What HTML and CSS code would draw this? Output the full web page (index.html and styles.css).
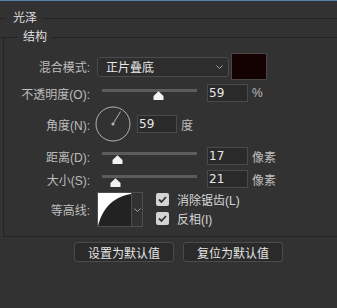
FILE: index.html
```html
<!DOCTYPE html>
<html>
<head>
  <meta charset="UTF-8">
  <title>光泽</title>
  <link rel="stylesheet" href="styles.css">
</head>
<body>
  <div class="panel">
    <div class="head head-outer"><span>光泽</span></div>

    <div class="group">
      <div class="head head-inner"><span>结构</span></div>

      <div class="row row-blend">
        <label class="lbl">混合模式:</label>
        <div class="select">
          <span>正片叠底</span>
          <svg class="chev" width="7" height="4" viewBox="0 0 7 4"><polyline points="0.5,0.5 3.5,3.5 6.5,0.5" fill="none" stroke="#a0a0a0" stroke-width="1"/></svg>
        </div>
        <div class="swatch"></div>
      </div>

      <div class="row">
        <label class="lbl">不透明度(O):</label>
        <div class="slider">
          <div class="track"></div>
          <svg class="thumb" style="left: 51px" width="11" height="9" viewBox="0 0 11 9"><path d="M5.5 0.3 L10.5 5 V9 H0.5 V5 Z" fill="#f2f2f2"/></svg>
        </div>
        <input class="num" type="text" value="59">
        <span class="unit">%</span>
      </div>

      <div class="row row-angle">
        <label class="lbl">角度(N):</label>
        <svg class="dial" width="36" height="36" viewBox="0 0 36 36">
          <circle cx="18" cy="18" r="17" fill="none" stroke="#b4b4b4" stroke-width="1"/>
          <line x1="18" y1="18" x2="25.5" y2="5.5" stroke="#b4b4b4" stroke-width="1"/>
          <circle cx="18" cy="18" r="1.6" fill="#b4b4b4"/>
        </svg>
        <input class="num num-angle" type="text" value="59">
        <span class="unit">度</span>
      </div>

      <div class="row row-gap">
        <label class="lbl">距离(D):</label>
        <div class="slider">
          <div class="track"></div>
          <svg class="thumb thumb-low" style="left: 10px" width="11" height="9" viewBox="0 0 11 9"><path d="M5.5 0.3 L10.5 5 V9 H0.5 V5 Z" fill="#f2f2f2"/></svg>
        </div>
        <input class="num" type="text" value="17">
        <span class="unit">像素</span>
      </div>

      <div class="row row-gap">
        <label class="lbl">大小(S):</label>
        <div class="slider">
          <div class="track"></div>
          <svg class="thumb thumb-low" style="left: 8px" width="11" height="9" viewBox="0 0 11 9"><path d="M5.5 0.3 L10.5 5 V9 H0.5 V5 Z" fill="#f2f2f2"/></svg>
        </div>
        <input class="num" type="text" value="21">
        <span class="unit">像素</span>
      </div>

      <div class="row row-contour">
        <label class="lbl">等高线:</label>
        <div class="contour">
          <div class="curve">
            <svg width="33" height="33" viewBox="0 0 33 33"><rect width="33" height="33" fill="#ffffff"/><path d="M0 33 C3 20, 12 4, 33 1 L33 33 Z" fill="#222222"/></svg>
          </div>
          <div class="drop">
            <svg width="7" height="4" viewBox="0 0 7 4"><polyline points="0.5,0.5 3.5,3.5 6.5,0.5" fill="none" stroke="#a0a0a0" stroke-width="1"/></svg>
          </div>
        </div>
        <div class="checks">
          <div class="check">
            <span class="box"><svg width="13" height="13" viewBox="0 0 13 13"><polyline points="3,6.5 5.5,9 10,4" fill="none" stroke="#333" stroke-width="1.8"/></svg></span>
            <span>消除锯齿(L)</span>
          </div>
          <div class="check">
            <span class="box"><svg width="13" height="13" viewBox="0 0 13 13"><polyline points="3,6.5 5.5,9 10,4" fill="none" stroke="#333" stroke-width="1.8"/></svg></span>
            <span>反相(I)</span>
          </div>
        </div>
      </div>
    </div>

    <div class="buttons">
      <button>设置为默认值</button>
      <button>复位为默认值</button>
    </div>
  </div>
</body>
</html>
```

FILE: styles.css
```css
html, body {
  margin: 0;
  background: #323232;
}
body {
  width: 337px;
  height: 307px;
  border-top: 1px solid #5283b3;
  overflow: hidden;
  font-family: "Liberation Sans", "Noto Sans CJK SC", sans-serif;
  font-size: 12px;
  color: #bdbdbd;
}
.panel {
  padding-top: 10px;
}
.head {
  display: flex;
  align-items: flex-start;
  height: 14px;
  line-height: 14px;
  color: #dedede;
}
.head::before,
.head::after {
  content: "";
  height: 1px;
  margin-top: 7px;
  background: #242424;
}
.head::after {
  flex: 1;
  margin-left: 5px;
}
.head-outer::before {
  width: 6px;
  margin-right: 7px;
}
.head-inner {
  margin: -7px 0 0 -4px;
}
.head-inner::before {
  width: 17px;
  margin-right: 6px;
}
.group {
  display: flex;
  flex-direction: column;
  margin: 12px 0 0 3px;
  padding-bottom: 9px;
  border-left: 1px solid #242424;
  border-bottom: 1px solid #242424;
}
.row {
  display: flex;
  align-items: center;
  height: 18px;
  margin-top: 4px;
}
.row-gap {
  margin-top: 5px;
}
.lbl {
  width: 86px;
  margin-right: 7px;
  text-align: right;
  white-space: nowrap;
}
.row-blend {
  height: 27px;
  margin-top: 9px;
}
.select {
  box-sizing: border-box;
  display: flex;
  align-items: center;
  justify-content: space-between;
  width: 132px;
  height: 20px;
  padding: 0 5px 0 8px;
  border: 1px solid #4b4b4b;
  border-radius: 3px;
  background: #2d2d2d;
  color: #e8e8e8;
}
.swatch {
  box-sizing: border-box;
  width: 36px;
  height: 27px;
  margin-left: 2px;
  border: 1px solid #474747;
  background: #140202;
}
.slider {
  position: relative;
  width: 95px;
  height: 18px;
  margin-left: 5px;
}
.track {
  height: 3px;
  margin-top: 5px;
  background: #5c5c5c;
}
.thumb {
  position: absolute;
  top: 7px;
}
.thumb-low {
  top: 8px;
}
.num {
  box-sizing: border-box;
  width: 41px;
  height: 18px;
  margin: 0 0 0 10px;
  padding: 0 1px;
  border: 1px solid #4a4a4a;
  background: #2a2a2a;
  color: #e8e8e8;
  font-family: "DejaVu Sans", sans-serif;
  font-size: 12px;
  outline: none;
}
.unit {
  margin-left: 4px;
}
.row-angle {
  height: 36px;
}
.dial {
  margin-left: -2px;
}
.num-angle {
  width: 40px;
  margin-left: 6px;
}
.row-contour {
  height: 35px;
}
.contour {
  display: flex;
}
.curve {
  box-sizing: border-box;
  width: 35px;
  height: 35px;
  border: 1px solid #4f4f4f;
}
.curve svg {
  display: block;
}
.drop {
  box-sizing: border-box;
  display: flex;
  align-items: center;
  justify-content: center;
  width: 11px;
  height: 35px;
  border: 1px solid #4f4f4f;
  border-left: none;
}
.checks {
  display: flex;
  flex-direction: column;
  gap: 6px;
  align-self: flex-start;
  margin: 1px 0 0 13px;
}
.check {
  display: flex;
  align-items: center;
  height: 13px;
  color: #d6d6d6;
}
.box {
  width: 13px;
  height: 13px;
  margin-right: 8px;
  border-radius: 2px;
  background: #d4d4d4;
}
.box svg {
  display: block;
}
.buttons {
  display: flex;
  gap: 9px;
  margin-top: 5px;
  padding-left: 74px;
}
button {
  box-sizing: border-box;
  width: 100px;
  height: 20px;
  padding: 0;
  border: 1px solid #4b4b4b;
  border-radius: 3px;
  background: #2a2a2a;
  color: #e4e4e4;
  font-family: "Liberation Sans", "Noto Sans CJK SC", sans-serif;
  font-size: 12px;
}
```
